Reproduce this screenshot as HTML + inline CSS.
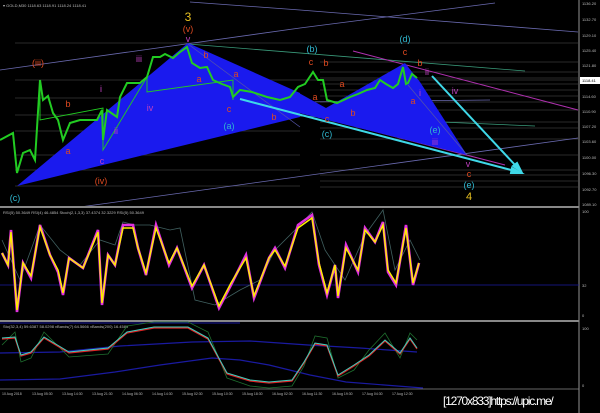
<!DOCTYPE html>
<html><head><meta charset="utf-8"><style>
html,body{margin:0;padding:0;background:#000;width:600px;height:413px;overflow:hidden}
svg{display:block}
text{font-family:"Liberation Sans",sans-serif}
</style></head><body>
<svg width="600" height="413" viewBox="0 0 600 413" xmlns="http://www.w3.org/2000/svg">
<rect width="600" height="413" fill="#000"/>
<g stroke="#555" stroke-width="0.6">
<line x1="15" y1="43" x2="578" y2="43"/><line x1="15" y1="80" x2="578" y2="80"/>
<line x1="15" y1="98" x2="300" y2="98"/><line x1="15" y1="115" x2="300" y2="115"/>
<line x1="15" y1="131" x2="300" y2="131"/><line x1="15" y1="155" x2="300" y2="155"/>
<line x1="15" y1="170" x2="300" y2="170"/><line x1="15" y1="186" x2="300" y2="186"/>
<line x1="320" y1="62" x2="578" y2="62"/>
<line x1="320" y1="72" x2="578" y2="72"/><line x1="320" y1="78" x2="578" y2="78"/>
<line x1="320" y1="84" x2="578" y2="84"/><line x1="320" y1="90" x2="578" y2="90"/>
<line x1="320" y1="96" x2="578" y2="96"/><line x1="320" y1="102" x2="578" y2="102"/>
<line x1="320" y1="110" x2="578" y2="110"/><line x1="320" y1="122" x2="578" y2="122"/>
<line x1="320" y1="128" x2="578" y2="128"/><line x1="320" y1="139" x2="578" y2="139"/>
<line x1="320" y1="155" x2="578" y2="155"/><line x1="320" y1="170" x2="578" y2="170"/>
<line x1="320" y1="175" x2="578" y2="175"/><line x1="320" y1="181" x2="578" y2="181"/>
<line x1="320" y1="187" x2="578" y2="187"/>
</g>
<g stroke="#6a6ab0" stroke-width="0.8" fill="none">
<line x1="0" y1="70" x2="300" y2="28"/><line x1="300" y1="28" x2="495" y2="3"/>
<line x1="300" y1="10" x2="578" y2="32"/><line x1="190" y1="2" x2="300" y2="10"/>
<line x1="80" y1="207" x2="578" y2="138"/>
<line x1="140" y1="95" x2="300" y2="102"/><line x1="300" y1="102" x2="490" y2="100"/>
</g>
<line x1="188" y1="44" x2="525" y2="71" stroke="#3a9a7a" stroke-width="0.8"/>
<line x1="300" y1="116" x2="535" y2="126" stroke="#3a9a7a" stroke-width="0.8"/>
<line x1="353" y1="51" x2="578" y2="110" stroke="#b030b0" stroke-width="1"/>
<line x1="300" y1="112" x2="505" y2="165" stroke="#b030b0" stroke-width="1"/>
<polygon points="17,186 188,43 300,93 300,117" fill="#1a1aee"/>
<polygon points="299,93 326,108 405,63 420,82 467,155 299,113" fill="#1a1aee"/>
<line x1="188" y1="44" x2="300" y2="127" stroke="#5555aa" stroke-width="0.7"/>
<line x1="408" y1="85" x2="467" y2="155" stroke="#5555aa" stroke-width="0.7"/>
<polyline fill="none" stroke="#22cc22" stroke-width="2" points="0,140 13,133 17,173 23,153 30,150 35,160 40,80 43,100 48,96 53,113 58,120 63,140 70,123 80,120 97,120 102,110 103,140 107,110 117,117 120,97 127,83 140,83 147,77 153,57 160,57 165,54 173,58 180,52 187,47 192,63 200,68 207,67 213,80 222,84 230,87 233,97 240,90 252,92 267,97 280,100 290,97 298,87 305,84 313,72 318,80 323,80 327,100 337,103 350,97 358,94 367,90 375,88 380,80 386,84 393,88 398,84 403,67 406,84 408,83 412,74 417,78"/>
<polyline fill="none" stroke="#22cc22" stroke-width="0.9" points="40,80 40,120 103,108 103,150 147,77 147,92 233,80 233,100"/>
<g stroke="#3fd8e8" stroke-width="2" fill="#3fd8e8">
<line x1="240" y1="99" x2="515" y2="171"/>
<polygon points="521,173 512,168 511,173"/>
<line x1="432" y1="76" x2="516" y2="166"/>
<polygon points="521,171 513,166 517,163"/>
</g>
<g font-size="9" text-anchor="middle">
<text x="188" y="21" fill="#e8c020" font-size="12">3</text>
<text x="188" y="32" fill="#e04a20">(v)</text>
<text x="188" y="42" fill="#c040c0">v</text>
<text x="38" y="66" fill="#e04a20">(iii)</text>
<text x="139" y="62" fill="#c040c0">iii</text>
<text x="101" y="92" fill="#c040c0">i</text>
<text x="68" y="107" fill="#e04a20">b</text>
<text x="68" y="154" fill="#e04a20">a</text>
<text x="102" y="164" fill="#c040c0">c</text>
<text x="101" y="184" fill="#e04a20">(iv)</text>
<text x="15" y="201" fill="#30b8d0">(c)</text>
<text x="150" y="111" fill="#c040c0">iv</text>
<text x="116" y="134" fill="#c040c0">ii</text>
<text x="206" y="58" fill="#e04a20">b</text>
<text x="199" y="82" fill="#e04a20">a</text>
<text x="236" y="77" fill="#e04a20">a</text>
<text x="229" y="112" fill="#e04a20">c</text>
<text x="229" y="129" fill="#30b8d0">(a)</text>
<text x="274" y="120" fill="#e04a20">b</text>
<text x="312" y="52" fill="#30b8d0">(b)</text>
<text x="311" y="65" fill="#e04a20">c</text>
<text x="326" y="66" fill="#e04a20">b</text>
<text x="342" y="87" fill="#e04a20">a</text>
<text x="315" y="100" fill="#e04a20">a</text>
<text x="353" y="116" fill="#e04a20">b</text>
<text x="327" y="122" fill="#e04a20">c</text>
<text x="327" y="137" fill="#30b8d0">(c)</text>
<text x="405" y="42" fill="#30b8d0">(d)</text>
<text x="405" y="55" fill="#e04a20">c</text>
<text x="420" y="66" fill="#e04a20">b</text>
<text x="427" y="75" fill="#c040c0">ii</text>
<text x="413" y="104" fill="#e04a20">a</text>
<text x="420" y="96" fill="#c040c0">i</text>
<text x="455" y="94" fill="#c040c0">iv</text>
<text x="435" y="133" fill="#30b8d0">(e)</text>
<text x="435" y="145" fill="#c040c0">iii</text>
<text x="468" y="167" fill="#c040c0">v</text>
<text x="469" y="177" fill="#e04a20">c</text>
<text x="469" y="188" fill="#30b8d0">(e)</text>
<text x="469" y="200" fill="#e8c020" font-size="11">4</text>
</g>
<text x="3" y="7" fill="#bbb" font-size="4">▾ GOLD,M30  1118.63 1118.91 1118.24 1118.41</text>
<line x1="579" y1="0" x2="579" y2="413" stroke="#bbb" stroke-width="0.8"/>
<g fill="#bbb" font-size="4">
<text x="582" y="5">1136.20</text><text x="582" y="21">1132.70</text><text x="582" y="37">1129.10</text>
<text x="582" y="52">1125.40</text><text x="582" y="67">1121.80</text><text x="582" y="98">1114.60</text>
<text x="582" y="113">1110.90</text><text x="582" y="128">1107.20</text><text x="582" y="143">1103.60</text>
<text x="582" y="159">1100.00</text><text x="582" y="175">1096.30</text><text x="582" y="191">1092.70</text>
<text x="582" y="206">1089.10</text>
</g>
<rect x="580" y="77" width="20" height="7" fill="#fff"/>
<text x="582" y="82" font-size="4" fill="#000">1118.41</text>
<rect x="0" y="206" width="579" height="2" fill="#888"/>
<rect x="0" y="320" width="579" height="2" fill="#888"/>
<text x="3" y="214" fill="#bbb" font-size="4">RSI(5) 50.3649  RSI(4) 46.4854  Stoch(2,1,3,3) 37.4374 32.3229  RSI(5) 50.3649</text>
<line x1="0" y1="285" x2="579" y2="285" stroke="#1a1aa0" stroke-width="0.8"/>
<polyline fill="none" stroke="#406060" stroke-width="0.8" points="2,240 20,280 40,225 60,250 80,265 100,240 115,245 123,222 135,225 150,225 170,230 180,228 195,300 215,305 240,290 260,280 275,250 300,225 312,212 325,250 345,280 365,235 383,210 395,270 410,240 420,260"/>
<polyline fill="none" stroke="#e030e0" stroke-width="2.6" points="2,253 8,265 11,230 17,312 23,263 31,278 40,225 50,255 58,272 63,295 69,258 83,268 98,230 102,305 108,255 115,265 123,225 133,225 138,248 146,275 156,225 169,265 177,248 192,288 204,265 219,308 231,285 246,255 254,298 269,258 275,248 285,268 298,225 312,215 319,265 327,295 335,265 338,298 346,245 358,272 365,228 375,242 383,222 388,272 396,285 406,225 413,285 419,263"/>
<polyline fill="none" stroke="#ffee00" stroke-width="1.5" points="2,253 8,265 11,232 17,310 23,263 31,276 40,227 50,255 58,270 63,293 69,258 83,268 98,232 102,303 108,255 115,265 123,228 133,228 138,248 146,273 156,228 169,263 177,248 192,286 204,265 219,306 231,283 246,258 254,296 269,258 275,250 285,266 298,228 312,218 319,263 327,293 335,265 338,296 346,248 358,270 365,230 375,242 383,225 388,270 396,283 406,228 413,283 419,263"/>
<g fill="#bbb" font-size="4"><text x="582" y="213">100</text><text x="582" y="287">32</text><text x="582" y="317">0</text></g>
<text x="3" y="328" fill="#bbb" font-size="4">Sto(32,3,4) 59.6387 58.0298  vBands(7) 64.5666  vBands(200) 16.4589</text>
<polyline fill="none" stroke="#1a1aa0" stroke-width="1.2" points="0,353 60,352 120,346 192,342 250,341 308,345 360,348 417,352"/>
<polyline fill="none" stroke="#1a1aa0" stroke-width="1.2" points="0,380 60,379 115,372 160,365 212,358 240,360 269,365 310,375 346,382 423,388"/>
<line x1="0" y1="323" x2="240" y2="323" stroke="#1a1aa0" stroke-width="1"/>
<polyline fill="none" stroke="#1e6e2e" stroke-width="0.8" points="2,345 15,332 21,362 31,358 44,332 69,357 108,354 127,326 154,322 188,322 208,332 227,378 250,386 269,388 292,386 304,366 315,336 327,338 338,378 354,370 369,350 385,333 400,358 410,333 417,340"/>
<polyline fill="none" stroke="#dd2222" stroke-width="1.3" points="2,339 15,338 21,356 31,353 44,338 69,353 108,349 127,333 154,328 188,328 208,339 227,374 250,381 269,383 292,381 304,363 315,344 327,346 338,376 354,366 369,356 385,341 400,354 410,339 417,349"/>
<polyline fill="none" stroke="#40d0c0" stroke-width="1" points="2,338 15,337 21,355 31,352 44,337 69,352 108,348 127,332 154,327 188,327 208,338 227,373 250,380 269,382 292,380 304,362 315,343 327,345 338,375 354,365 369,355 385,340 400,353 410,338 417,348"/>
<g fill="#bbb" font-size="4"><text x="582" y="330">100</text><text x="582" y="387">0</text></g>
<line x1="0" y1="389" x2="579" y2="389" stroke="#888" stroke-width="0.8"/>
<g fill="#bbb" font-size="3.5">
<text x="2" y="395">10 Aug 2018</text><text x="32" y="395">13 Aug 05:30</text><text x="62" y="395">13 Aug 14:30</text>
<text x="92" y="395">13 Aug 21:30</text><text x="122" y="395">14 Aug 06:30</text><text x="152" y="395">14 Aug 14:30</text>
<text x="182" y="395">15 Aug 02:30</text><text x="212" y="395">15 Aug 10:30</text><text x="242" y="395">15 Aug 18:30</text>
<text x="272" y="395">16 Aug 02:30</text><text x="302" y="395">16 Aug 11:30</text><text x="332" y="395">16 Aug 19:30</text>
<text x="362" y="395">17 Aug 04:30</text><text x="392" y="395">17 Aug 12:30</text>
</g>
<text x="443" y="405" fill="#fff" font-size="12" font-family="Liberation Mono,monospace" letter-spacing="-1.2">[1270x833]https://upic.me/</text>
</svg>
</body></html>
